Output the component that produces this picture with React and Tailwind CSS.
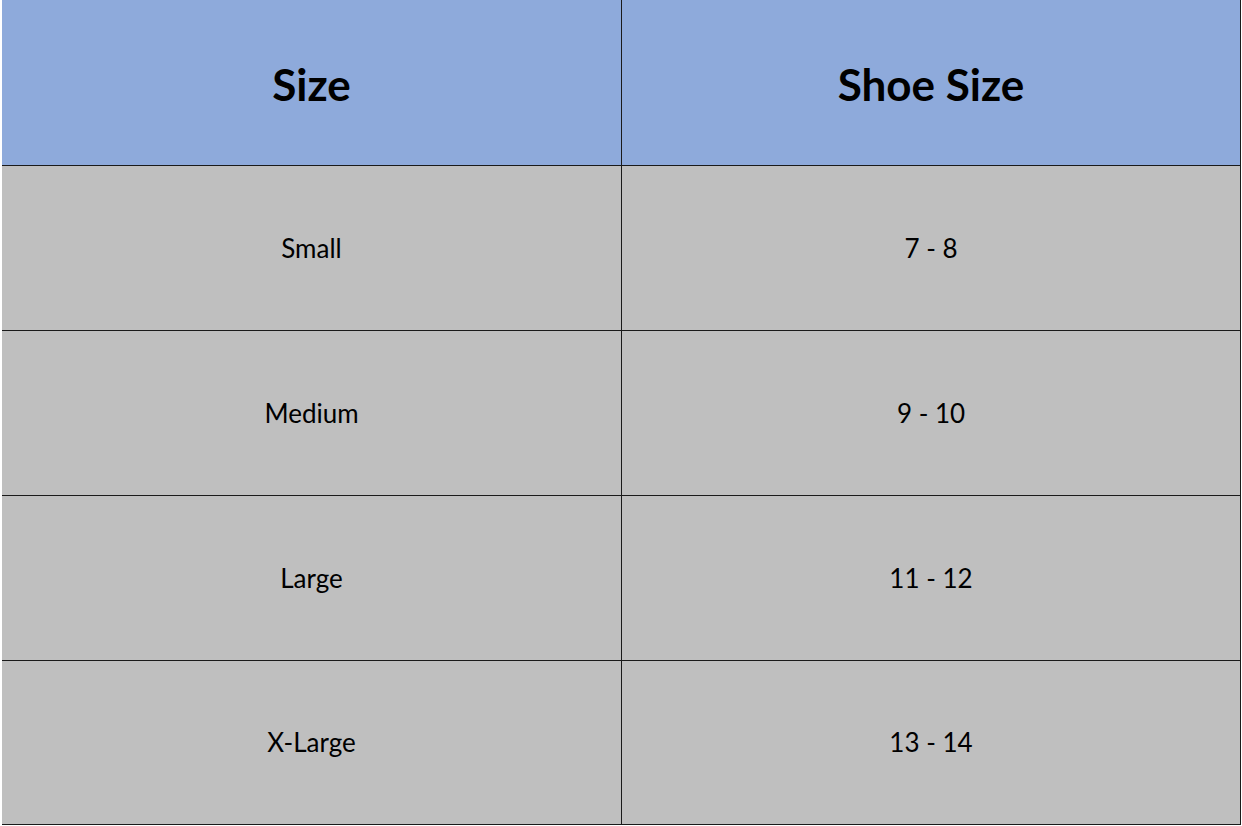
export default function App() {
    const rows = [
        ['Small', '7 - 8', 'h-[165px]'],
        ['Medium', '9 - 10', 'h-[165px]'],
        ['Large', '11 - 12', 'h-[165px]'],
        ['X-Large', '13 - 14', 'h-[164px]'],
    ];

    return (
        <div className="w-[1242px] h-[826px] bg-white overflow-hidden" style={{ fontFamily: 'Lato, "Open Sans", sans-serif' }}>
            <div className="ml-[2px] w-[1239px] grid grid-cols-[620px_619px] text-black">
                {/* header */}
                <div className="h-[166px] bg-[#8eaadb] border-r border-b border-[#1a1a1a] flex items-center justify-center pt-[2px]">
                    <span className="text-[44px] font-bold">Size</span>
                </div>
                <div className="h-[166px] bg-[#8eaadb] border-r border-b border-[#1a1a1a] flex items-center justify-center pt-[2px]">
                    <span className="text-[44px] font-bold">Shoe Size</span>
                </div>

                {rows.map(([size, shoe, h]) => (
                    <div key={size} className="contents">
                        <div className={`${h} bg-[#bfbfbf] border-r border-b border-[#1a1a1a] flex items-center justify-center`}>
                            <span className="text-[26px]">{size}</span>
                        </div>
                        <div className={`${h} bg-[#bfbfbf] border-r border-b border-[#1a1a1a] flex items-center justify-center`}>
                            <span className="text-[26px]">{shoe}</span>
                        </div>
                    </div>
                ))}
            </div>
        </div>
    );
}
